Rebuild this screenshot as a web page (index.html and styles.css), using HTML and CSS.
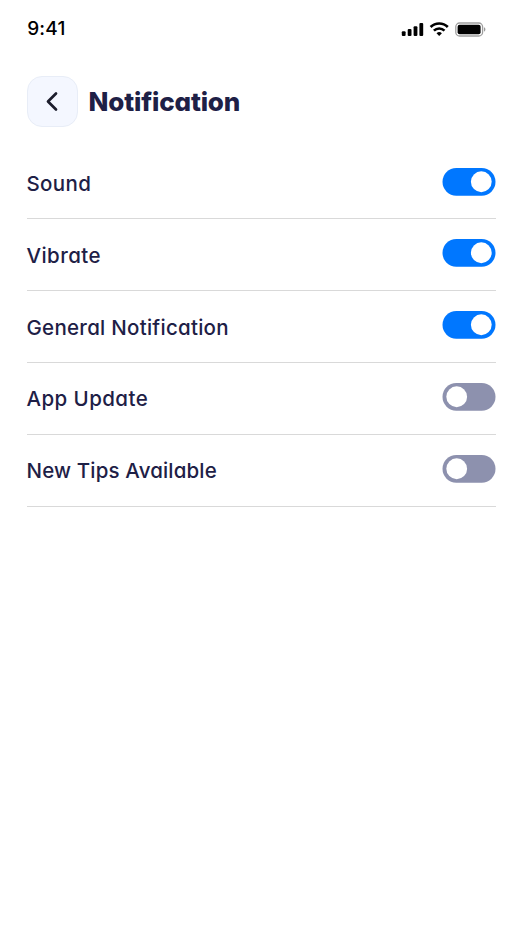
FILE: index.html
```html
<!DOCTYPE html>
<html lang="en">
<head>
<meta charset="utf-8">
<meta name="viewport" content="width=device-width, initial-scale=1">
<title>Notification</title>
<link rel="stylesheet" href="styles.css">
</head>
<body>
<div class="status">
  <span class="time">9:41</span>
  <svg class="status-icons" width="86" height="18" viewBox="0 0 86 18">
    <rect x="1.8" y="10.2" width="3.8" height="4.8" rx="1.1"/>
    <rect x="7.7" y="7.9" width="3.8" height="7.1" rx="1.1"/>
    <rect x="13.6" y="5.2" width="3.8" height="9.8" rx="1.1"/>
    <rect x="19.4" y="2" width="3.8" height="13" rx="1.1"/>
    <g fill="none" stroke="#000" stroke-width="2.6">
      <path d="M30.6 6a12.2 12.2 0 0 1 17.2 0"/>
      <path d="M33.9 9.6a7.6 7.6 0 0 1 10.6 0"/>
    </g>
    <path d="M36.5 12.2a4.1 4.1 0 0 1 5.4 0L39.2 15z"/>
    <rect x="55.8" y="2" width="26.8" height="13" rx="3.8" fill="none" stroke="#000" stroke-opacity=".38" stroke-width="1.3"/>
    <rect x="57.6" y="3.8" width="23" height="9.4" rx="2"/>
    <path d="M84 6.3v4.4a2.4 2.4 0 0 0 0-4.4z" opacity=".4"/>
  </svg>
</div>
<header class="header">
  <button class="back" aria-label="Back">
    <svg width="24" height="24" viewBox="0 0 24 24"><path d="M16 3.5 8 11.5l8 8" fill="none" stroke="#1b1d2c" stroke-width="2.7" stroke-linecap="round" stroke-linejoin="round"/></svg>
  </button>
  <h1>Notification</h1>
</header>
<main class="list">
  <div class="row"><span class="label sound">Sound</span><svg class="toggle on" viewBox="0.5 0 53 28"><rect class="track" width="53" height="27.7" rx="13.85"/><circle cx="38.8" cy="13.75" r="10.4"/></svg></div>
  <div class="row"><span class="label vibrate">Vibrate</span><svg class="toggle on" viewBox="0.5 0 53 28"><rect class="track" width="53" height="27.7" rx="13.85"/><circle cx="38.8" cy="13.75" r="10.4"/></svg></div>
  <div class="row"><span class="label general">General Notification</span><svg class="toggle on" viewBox="0.5 0 53 28"><rect class="track" width="53" height="27.7" rx="13.85"/><circle cx="38.8" cy="13.75" r="10.4"/></svg></div>
  <div class="row"><span class="label update">App Update</span><svg class="toggle" viewBox="0.5 0 53 28"><rect class="track" width="53" height="27.7" rx="13.85"/><circle cx="14.2" cy="13.75" r="10.4"/></svg></div>
  <div class="row"><span class="label tips">New Tips Available</span><svg class="toggle" viewBox="0.5 0 53 28"><rect class="track" width="53" height="27.7" rx="13.85"/><circle cx="14.2" cy="13.75" r="10.4"/></svg></div>
</main>
</body>
</html>
```
FILE: styles.css
```css
* { box-sizing: border-box; }
body {
  margin: 0;
  min-height: 937px;
  padding: 0 26.5px;
  background: #fff;
  color: #1e2046;
  font-family: Inter, "Liberation Sans", sans-serif;
  font-feature-settings: "cv11" 1;
}
.status {
  display: flex;
  justify-content: space-between;
  align-items: center;
  height: 57px;
  padding-right: 9.5px;
}
.time { padding: 1px 0 0 0.7px; color: #000; font-size: 19px; font-weight: 500; line-height: 24px; letter-spacing: 0.2px; }
.status-icons { display: block; margin-top: 3px; }
.header { display: flex; align-items: center; height: 51px; margin-top: 19px; }
.back {
  display: flex;
  align-items: center;
  justify-content: center;
  width: 51px;
  height: 51px;
  padding: 0;
  border: 1px solid #e8edf7;
  border-radius: 15px;
  background: #f4f7ff;
}
h1 { margin: 0 0 0 11px; font-size: 26px; line-height: 36px; font-weight: 800; letter-spacing: -0.16px; }
.list { margin-top: 20.5px; }
.row {
  display: flex;
  justify-content: space-between;
  align-items: flex-start;
  height: 71.85px;
  padding-top: 20.4px;
  border-bottom: 1px solid #d9d9d9;
}
.label { padding-top: 1px; font-size: 20.5px; font-weight: 500; line-height: 30px; white-space: nowrap; }
.sound { letter-spacing: 0.35px; }
.vibrate { letter-spacing: 0.45px; }
.general { letter-spacing: 0.27px; }
.update { letter-spacing: 0.43px; }
.tips { letter-spacing: 0.16px; }
.toggle { display: block; width: 53px; height: 28px; margin-top: -0.4px; fill: #fff; overflow: visible; }
.track { fill: #8d91ae; }
.on .track { fill: #0077ff; }
```
